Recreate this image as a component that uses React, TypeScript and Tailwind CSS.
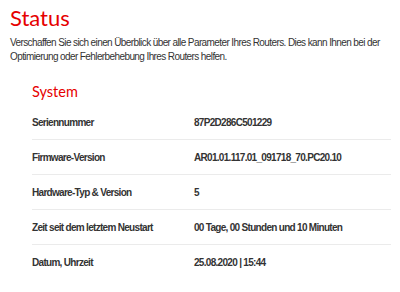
import React from 'react';

const rows: { label: string; value: string }[] = [
  { label: 'Seriennummer', value: '87P2D286C501229' },
  { label: 'Firmware-Version', value: 'AR01.01.117.01_091718_70.PC20.10' },
  { label: 'Hardware-Typ & Version', value: '5' },
  { label: 'Zeit seit dem letztem Neustart', value: '00 Tage, 00 Stunden und 10 Minuten' },
  { label: 'Datum, Uhrzeit', value: '25.08.2020 | 15:44' },
];

const App: React.FC = () => {
  return (
    <div className="w-[400px] h-[292px] bg-white overflow-hidden pl-[10px] pr-[9px] pt-[3px]">
      <h1 className="text-[22px] leading-[30px] text-[#e60000] font-['Lato',sans-serif]">Status</h1>
      <p className="mt-[3px] text-[10px] leading-[14px] tracking-[-0.6px] text-[#333333] font-['Liberation_Sans',Arial,sans-serif]">
        Verschaffen Sie sich einen Überblick über alle Parameter Ihres Routers. Dies kann Ihnen bei der
        Optimierung oder Fehlerbehebung Ihres Routers helfen.
      </p>
      <div className="pl-[22px]">
        <h2 className="mt-[17px] text-[14.5px] leading-[22px] text-[#e60000] font-['Lato',sans-serif]">System</h2>
        <div className="mt-[2px] font-['Liberation_Sans',Arial,sans-serif] text-[10px] tracking-[-0.7px] font-bold text-[#333333]">
          {rows.map((row, i) => (
            <div
              key={row.label}
              className={`flex items-center h-[35px] ${i < rows.length - 1 ? 'border-b border-[#ebebeb]' : ''}`}
            >
              <div className="w-[162px] shrink-0">{row.label}</div>
              <div>{row.value}</div>
            </div>
          ))}
        </div>
      </div>
    </div>
  );
};

export default App;
